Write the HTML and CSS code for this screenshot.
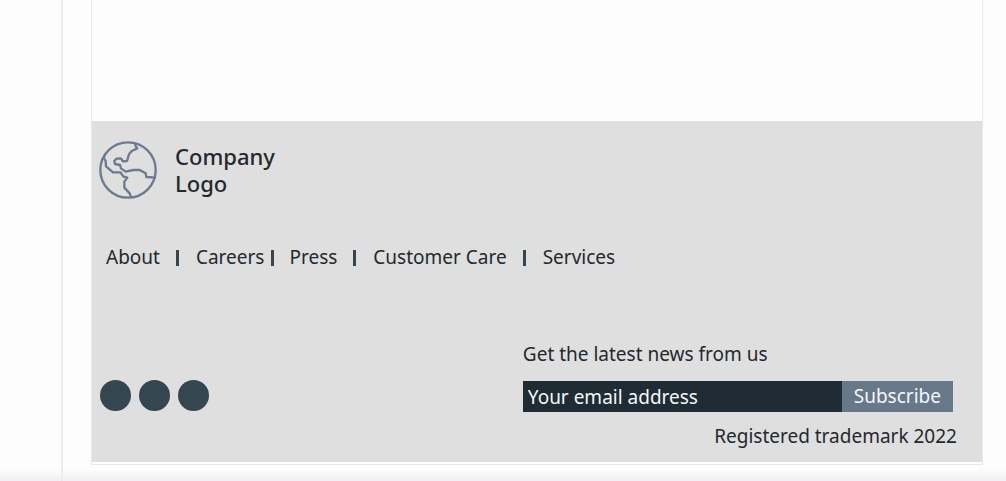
FILE: index.html
```html
<!DOCTYPE html>
<html lang="en">
<head>
<meta charset="utf-8">
<meta name="viewport" content="width=device-width, initial-scale=1">
<title>Company footer</title>
<link rel="stylesheet" href="styles.css">
</head>
<body>
<div class="canvas">
  <div class="frame">
    <main class="content"></main>
    <footer class="footer">
      <div class="brand">
        <svg class="globe" viewBox="12 12 174 174" aria-hidden="true">
          <circle cx="99" cy="99" r="83"/>
          <path d="M120 18 122 28 127 34 110 42 102 52 96 72 84 73 78 64 64 65 58 72 60 81 75 84 78 94 92 104 115 99 134 99 152 109 154 120 183 122"/>
          <path d="M28 54 27 64 32 72 33 88 54 106 76 106 86 119 97 122 88 134 88 152 104 169 108 180"/>
        </svg>
        <p class="brand-name">Company<br>Logo</p>
      </div>
      <nav aria-label="Footer">
        <ul class="links">
          <li><a href="#about">About</a></li>
          <li class="tight"><a href="#careers">Careers</a></li>
          <li><a href="#press">Press</a></li>
          <li><a href="#care">Customer Care</a></li>
          <li><a href="#services">Services</a></li>
        </ul>
      </nav>
      <div class="bottom">
        <div class="social">
          <span class="dot"></span>
          <span class="dot"></span>
          <span class="dot"></span>
        </div>
        <div class="newsletter">
          <label class="headline" for="email">Get the latest news from us</label>
          <form class="signup">
            <input class="email" id="email" type="email" placeholder="Your email address">
            <button class="subscribe" type="button">Subscribe</button>
          </form>
          <p class="legal">Registered trademark 2022</p>
        </div>
      </div>
    </footer>
  </div>
</div>
</body>
</html>
```
FILE: styles.css
```css
* {
  box-sizing: border-box;
}

body {
  margin: 0;
  background: linear-gradient(to top, #f1eff2, #fefdfe 12px);
  color: #23292d;
  font: 19px/27px "Noto Sans", sans-serif;
}

.canvas {
  min-height: 100vh;
  margin-left: 61px;
  padding: 0 23px 16px 28px;
  border-left: 2px solid #ececee;
}

.frame {
  padding-bottom: 2px;
  border: solid #e8e8ea;
  border-width: 0 1px 1px;
  background: #fefdfe;
}

.content {
  min-height: 121px;
}

.footer {
  padding: 20px 25px 12px 7px;
  background: #dfdfdf;
}

.brand {
  display: flex;
  align-items: center;
  gap: 18px;
}

.globe {
  width: 58px;
  height: 58px;
  fill: none;
  stroke: #6b7c8e;
  stroke-width: 7;
  stroke-linejoin: round;
}

.brand-name {
  margin: 0;
  font-size: 22px;
  font-weight: 500;
}

.links {
  display: flex;
  flex-wrap: wrap;
  margin: 0;
  padding: 45px 7px 0;
  list-style: none;
}

.links li {
  display: flex;
  align-items: center;
}

.links li + li::before {
  content: "";
  width: 3px;
  height: 16px;
  margin: 0 17px 0 16px;
  background: #344751;
}

.links .tight + li::before {
  margin: 0 15px 0 7px;
}

.links a {
  color: inherit;
  text-decoration: none;
}

.bottom {
  display: grid;
  grid-template-columns: 41fr 42fr;
  align-items: center;
  padding-top: 70px;
}

.social {
  display: flex;
  gap: 8px;
  padding-left: 1px;
}

.dot {
  width: 31px;
  height: 31px;
  border-radius: 50%;
  background: #344751;
}

.newsletter {
  display: flex;
  flex-direction: column;
}

.headline {
  margin-bottom: 13px;
}

.signup {
  display: flex;
  margin-right: 4px;
}

.email,
.subscribe {
  height: 31px;
  border: 0;
  border-radius: 0;
  color: #f4f7f9;
  font: inherit;
}

.email {
  flex: 1;
  min-width: 0;
  padding: 0 5px;
  background: #1f2c34;
}

.email::placeholder {
  color: inherit;
  opacity: 1;
}

.subscribe {
  padding: 0 12px;
  background: #677889;
}

.legal {
  margin: 11px 0 0;
  text-align: right;
}
```
